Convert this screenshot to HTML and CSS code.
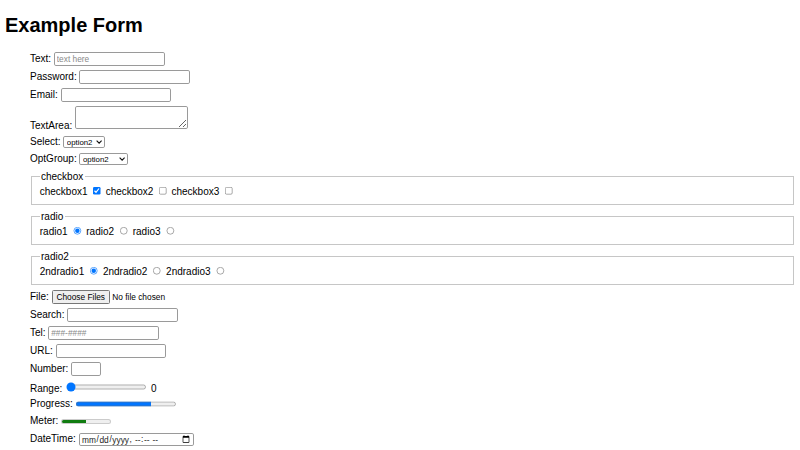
FILE: index.html
```html
<!DOCTYPE html>
<html>
<head>
<meta charset="utf-8">
<title>Example Form</title>
<link rel="stylesheet" href="styles.css">
</head>
<body>
<h1 class="title">Example Form</h1>
<form class="form">
  <div class="row"><label>Text: <input class="field" type="text" placeholder="text here"></label></div>
  <div class="row"><label>Password: <input class="field" type="password"></label></div>
  <div class="row"><label>Email: <input class="field" type="email"></label></div>
  <div class="row"><label>TextArea: <textarea class="area"></textarea></label></div>
  <div class="row"><label>Select: <span class="selbox"><select class="sel sel-one"><option>option1</option><option selected>option2</option><option>option3</option></select><svg class="chev" viewBox="0 0 10 6" width="10" height="6"><path d="M1 1 L5 5 L9 1" fill="none" stroke="#111" stroke-width="1.8"/></svg></span></label></div>
  <div class="row"><label>OptGroup: <span class="selbox"><select class="sel sel-two"><optgroup label="Group 1"><option>option1</option><option selected>option2</option></optgroup><optgroup label="Group 2"><option>option3</option></optgroup></select><svg class="chev" viewBox="0 0 10 6" width="10" height="6"><path d="M1 1 L5 5 L9 1" fill="none" stroke="#111" stroke-width="1.8"/></svg></span></label></div>
  <fieldset class="group">
    <legend>checkbox</legend>
    <label>checkbox1 <input type="checkbox" checked></label>
    <label>checkbox2 <input type="checkbox"></label>
    <label>checkbox3 <input type="checkbox"></label>
  </fieldset>
  <fieldset class="group">
    <legend>radio</legend>
    <label>radio1 <input type="radio" name="r" checked></label>
    <label>radio2 <input type="radio" name="r"></label>
    <label>radio3 <input type="radio" name="r"></label>
  </fieldset>
  <fieldset class="group">
    <legend>radio2</legend>
    <label>2ndradio1 <input type="radio" name="r2" checked></label>
    <label>2ndradio2 <input type="radio" name="r2"></label>
    <label>2ndradio3 <input type="radio" name="r2"></label>
  </fieldset>
  <div class="row"><label>File: <input class="file" type="file" multiple></label></div>
  <div class="row"><label>Search: <input class="field" type="search"></label></div>
  <div class="row"><label>Tel: <input class="field" type="tel" placeholder="###-####"></label></div>
  <div class="row"><label>URL: <input class="field" type="url"></label></div>
  <div class="row"><label>Number: <input class="field num" type="number"></label></div>
  <div class="row"><label>Range: <input type="range" min="0" max="100" value="0"></label> <output>0</output></div>
  <div class="row"><label>Progress: <progress max="100" value="75"></progress></label></div>
  <div class="row"><label>Meter: <meter min="0" max="100" value="50"></meter></label></div>
  <div class="row"><label>DateTime: <input class="field date" type="datetime-local"></label></div>
</form>
</body>
</html>
```
FILE: styles.css
```css
html {
  margin: 0;
  padding: 0;
}
body {
  zoom: 0.625;
  font-family: "Liberation Sans", Arial, sans-serif;
  color: #000;
  background: #fff;
}
input, select, textarea, button {
  font-family: "Liberation Sans", Arial, sans-serif;
  font-size: 13.33px;
}
.title {
  font-size: 32px;
  margin: 15px 0 19.5px;
}
.form {
  margin-left: 40px;
}
.row {
  padding: 3.5px 0;
  min-height: 20.5px;
}
.field {
  width: 177px;
  height: 22px;
  box-sizing: border-box;
  border: 1px solid #9a9a9a;
  border-radius: 3px;
  padding: 1px 3px;
}
.field::placeholder {
  color: #8a8a8a;
}
.num {
  width: 48px;
}
.date {
  width: 185px;
  color: #222;
}
.area {
  width: 181px;
  height: 37px;
  box-sizing: border-box;
  border: 1px solid #9a9a9a;
  border-radius: 3px;
  vertical-align: baseline;
}
.selbox {
  position: relative;
  display: inline-block;
}
.sel {
  appearance: none;
  -webkit-appearance: none;
  height: 19px;
  box-sizing: border-box;
  border: 1px solid #9a9a9a;
  border-radius: 3px;
  background: #fff;
  color: #000;
  padding: 0 16px 0 4px;
  font-size: 12.5px;
}
.sel-one {
  width: 67px;
}
.sel-two {
  width: 78px;
}
.chev {
  position: absolute;
  right: 5px;
  top: 7px;
  pointer-events: none;
}
.group {
  margin: 5px 2px 6px;
  padding: 5px 12px 10.5px;
  border: 2px groove #c6c6c6;
}
.group + .group {
  margin-top: 10px;
}
```
